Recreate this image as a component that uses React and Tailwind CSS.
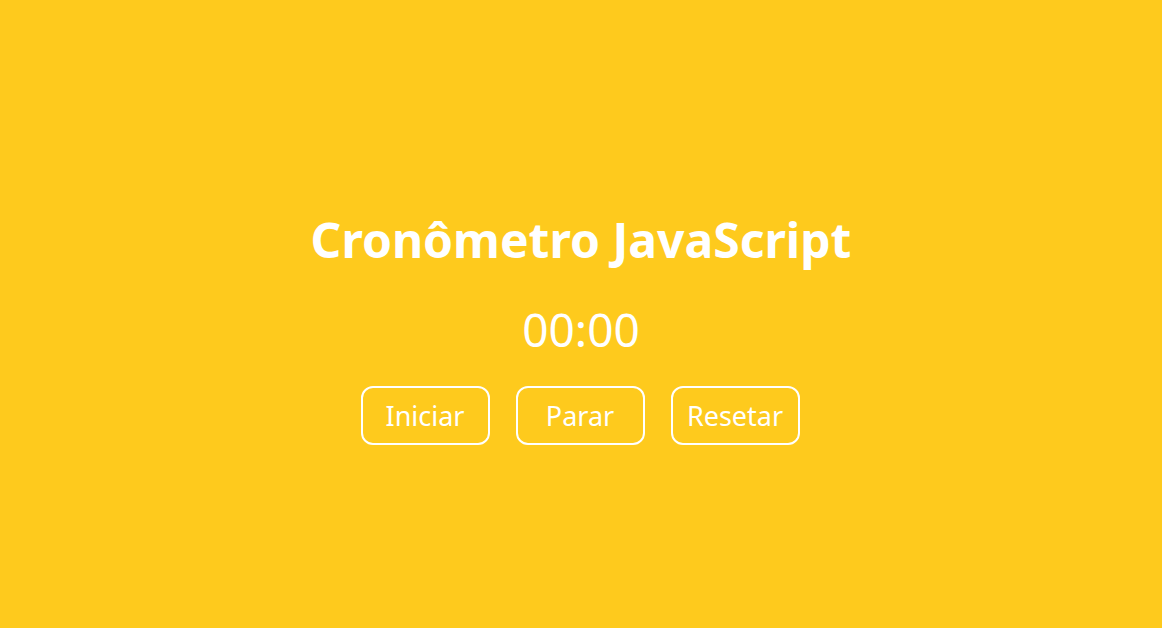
import React, { useEffect, useRef, useState } from "react";

const format = (s) => {
  const m = String(Math.floor(s / 60)).padStart(2, "0");
  const sec = String(s % 60).padStart(2, "0");
  return `${m}:${sec}`;
};

const Btn = ({ label, onClick }) => (
  <button
    onClick={onClick}
    className="w-[129px] h-[59px] rounded-[12px] border-2 border-white text-white text-[27px] leading-none bg-transparent cursor-pointer"
  >
    {label}
  </button>
);

const App = () => {
  const [seconds, setSeconds] = useState(0);
  const timer = useRef(null);

  const start = () => {
    if (timer.current) return;
    timer.current = setInterval(() => setSeconds((s) => s + 1), 1000);
  };
  const stop = () => {
    clearInterval(timer.current);
    timer.current = null;
  };
  const reset = () => {
    stop();
    setSeconds(0);
  };

  useEffect(() => () => clearInterval(timer.current), []);

  return (
    <div className="min-h-screen bg-[#feca1d] flex flex-col items-center pt-[208px] font-['Noto_Sans',sans-serif] text-white">
      <h1 className="text-[48px] font-bold leading-[64px]">Cronômetro JavaScript</h1>
      <div className="mt-[27px] text-[46px] leading-[60px]">{format(seconds)}</div>
      <div className="mt-[27px] flex gap-[26px] pr-[2px]">
        <Btn label="Iniciar" onClick={start} />
        <Btn label="Parar" onClick={stop} />
        <Btn label="Resetar" onClick={reset} />
      </div>
    </div>
  );
};

export default App;
